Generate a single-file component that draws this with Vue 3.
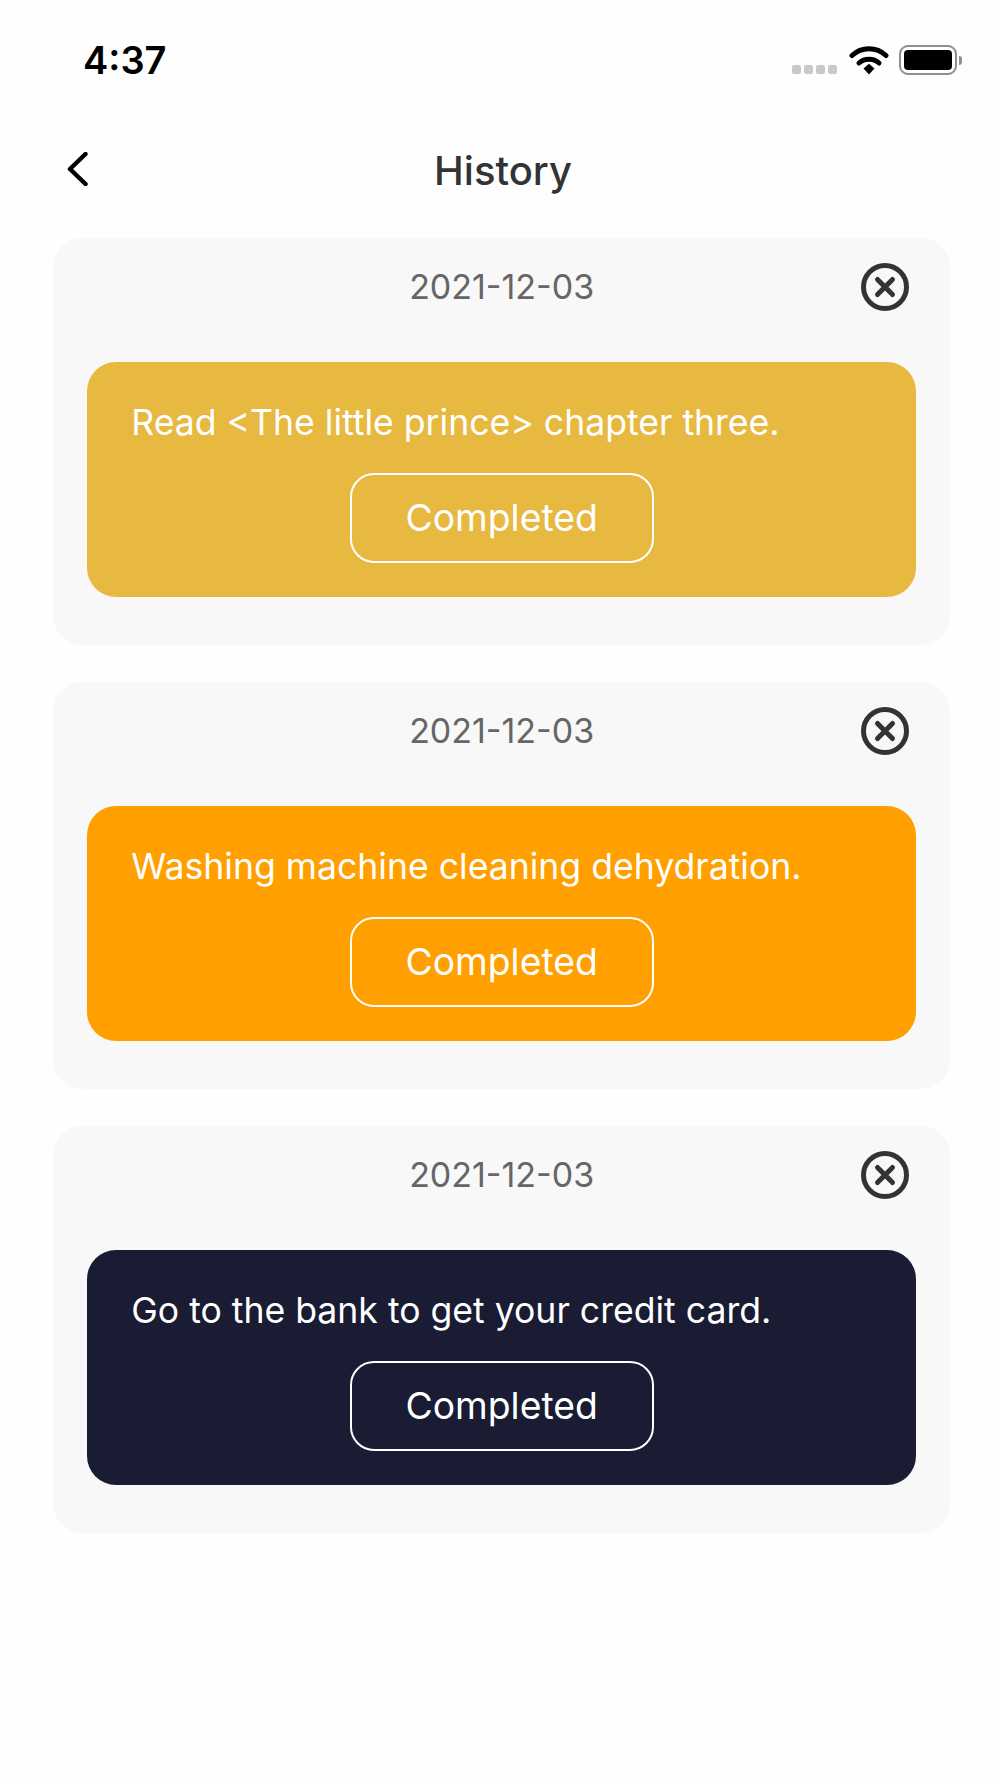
<script setup>
const tasks = [
  { id: 1, date: '2021-12-03', text: 'Read <The little prince> chapter three.', color: '#e7b940' },
  { id: 2, date: '2021-12-03', text: 'Washing machine cleaning dehydration.', color: '#ff9f00' },
  { id: 3, date: '2021-12-03', text: 'Go to the bank to get your credit card.', color: '#191c32' }
]
</script>

<template>
  <div class="page">
    <div class="status-bar">
      <span class="time">4:37</span>
      <div class="status-icons">
        <div class="signal">
          <i v-for="n in 4" :key="n"></i>
        </div>
        <svg class="wifi" width="40" height="30" viewBox="0 0 40 30">
          <path d="M3 10.5C12.5 1.5 27.5 1.5 37 10.5" fill="none" stroke="#000" stroke-width="5" stroke-linecap="round" />
          <path d="M10 18C15.5 13 24.5 13 30 18" fill="none" stroke="#000" stroke-width="5" stroke-linecap="round" />
          <path d="M14.5 23.5L20 18.8L25.5 23.5L20 29.5Z" fill="#000" />
        </svg>
        <div class="battery">
          <div class="battery-body"><div class="battery-fill"></div></div>
          <div class="battery-nub"></div>
        </div>
      </div>
    </div>

    <div class="nav">
      <svg class="back" width="22" height="34" viewBox="0 0 22 34">
        <path d="M18.5 2L3 17L18.5 32" fill="none" stroke="#000" stroke-width="4.5" stroke-linecap="round" stroke-linejoin="round" />
      </svg>
      <span class="title">History</span>
    </div>

    <div class="list">
      <div v-for="task in tasks" :key="task.id" class="card">
        <div class="card-head">
          <span class="date">{{ task.date }}</span>
          <svg class="close" width="48" height="48" viewBox="0 0 48 48">
            <circle cx="24" cy="24" r="21.5" fill="none" stroke="#333" stroke-width="5" />
            <path d="M16.5 16.5L31.5 31.5M31.5 16.5L16.5 31.5" fill="none" stroke="#333" stroke-width="5" stroke-linecap="round" />
          </svg>
        </div>
        <div class="task" :style="{ background: task.color }">
          <p class="task-text">{{ task.text }}</p>
          <div class="done-btn">Completed</div>
        </div>
      </div>
    </div>
  </div>
</template>

<style scoped>
.page {
  width: 1000px;
  height: 1778px;
  background: #fefefe;
  font-family: Inter, "Liberation Sans", sans-serif;
  overflow: hidden;
}
.status-bar {
  display: flex;
  justify-content: space-between;
  align-items: flex-start;
  height: 45px;
  padding: 40px 37px 0 83px;
}
.time {
  font-size: 38px;
  font-weight: 600;
  line-height: 40px;
  color: #000;
}
.status-icons {
  display: flex;
  align-items: flex-start;
  padding-top: 5px;
}
.signal {
  display: flex;
  gap: 3px;
  margin-top: 20px;
  margin-right: 12px;
}
.signal i {
  width: 9px;
  height: 9px;
  border-radius: 2px;
  background: #c9c9c9;
}
.wifi {
  margin-right: 10px;
}
.battery {
  display: flex;
  align-items: center;
  margin-right: 1px;
}
.battery-body {
  width: 58px;
  height: 30px;
  box-sizing: border-box;
  border: 2px solid #8e8e8e;
  border-radius: 9px;
  padding: 3px;
}
.battery-fill {
  height: 100%;
  background: #000;
  border-radius: 4px;
}
.battery-nub {
  width: 3px;
  height: 9px;
  margin-left: 2px;
  background: #8e8e8e;
  border-radius: 0 3px 3px 0;
}
.nav {
  display: grid;
  grid-template-columns: 1fr auto 1fr;
  align-items: center;
  height: 60px;
  padding: 56px 61px 0 67px;
}
.back {
  display: block;
  margin-bottom: 4px;
}
.title {
  font-size: 40px;
  font-weight: 450;
  color: #333;
  line-height: 60px;
}
.list {
  display: flex;
  flex-direction: column;
  gap: 37px;
  margin: 37px 50px 0 53.3px;
}
.card {
  background: #f8f8f8;
  border-radius: 29px;
  padding: 0 34px 48px;
}
.card-head {
  display: grid;
  grid-template-columns: 1fr auto 1fr;
  align-items: center;
  height: 97px;
  padding-bottom: 27px;
}
.date {
  grid-column: 2;
  font-size: 34px;
  color: #666;
}
.close {
  justify-self: end;
  margin-right: 7px;
}
.task {
  border-radius: 29px;
  padding: 34px 44px 34px;
}
.task-text {
  margin: 0;
  font-size: 35.6px;
  line-height: 54px;
  font-weight: 420;
  color: #fff;
}
.done-btn {
  box-sizing: border-box;
  width: 304px;
  height: 90px;
  margin: 23px auto 0;
  border: 2.5px solid #fff;
  border-radius: 24px;
  font-size: 37.3px;
  line-height: 85px;
  text-align: center;
  color: #fff;
}
</style>
